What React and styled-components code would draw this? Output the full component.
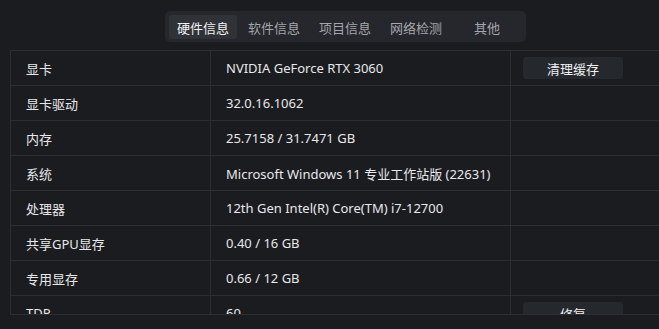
import React, { useState } from "react";
import styled, { createGlobalStyle } from "styled-components";

const GlobalStyle = createGlobalStyle`
  html, body {
    margin: 0;
    padding: 0;
    background: #1b1c20;
    overflow: hidden;
  }
  body {
    font-family: "Noto Sans", "Noto Sans CJK SC", sans-serif;
    font-size: 13px;
    color: #e8e8ea;
  }
`;

const tabs = ["硬件信息", "软件信息", "项目信息", "网络检测", "其他"];

const rows = [
  { label: "显卡", value: "NVIDIA GeForce RTX 3060", action: "清理缓存" },
  { label: "显卡驱动", value: "32.0.16.1062" },
  { label: "内存", value: "25.7158 / 31.7471 GB" },
  { label: "系统", value: "Microsoft Windows 11 专业工作站版 (22631)" },
  { label: "处理器", value: "12th Gen Intel(R) Core(TM) i7-12700" },
  { label: "共享GPU显存", value: "0.40 / 16 GB" },
  { label: "专用显存", value: "0.66 / 12 GB" },
  { label: "TDP", value: "60", action: "修复" },
];

const App = () => {
  const [active, setActive] = useState(0);
  return (
    <Page>
      <GlobalStyle />
      <TabRow>
        <TabBar>
          {tabs.map((t, i) => (
            <Tab key={t} $active={i === active} onClick={() => setActive(i)}>
              {t}
            </Tab>
          ))}
        </TabBar>
      </TabRow>

      {/* 表格区域，超出部分被裁掉 */}
      <TableBox>
        {rows.map((r) => (
          <Row key={r.label}>
            <Cell>{r.label}</Cell>
            <Cell>{r.value}</Cell>
            <Cell $last>{r.action && <ActionButton>{r.action}</ActionButton>}</Cell>
          </Row>
        ))}
      </TableBox>
    </Page>
  );
};

export default App;

const Page = styled.div`
  width: 691px;
  box-sizing: border-box;
  padding: 11px 10px 0;
  display: flex;
  flex-direction: column;
  gap: 8px;
`;

const TabRow = styled.div`
  display: flex;
  justify-content: center;
`;

const TabBar = styled.div`
  display: flex;
  gap: 3px;
  padding: 4px 5px 3px 4px;
  height: 24px;
  background: #25272c;
  border-radius: 5px;
`;

const Tab = styled.div`
  width: 68px;
  height: 24px;
  display: flex;
  align-items: center;
  justify-content: center;
  border-radius: 3px;
  font-size: 13px;
  cursor: pointer;
  color: ${(p) => (p.$active ? "#f2f2f4" : "#a3a6ab")};
  background: ${(p) => (p.$active ? "#2f3237" : "transparent")};
`;

const TableBox = styled.div`
  height: 265px;
  box-sizing: border-box;
  border: 1px solid #2c2e33;
  border-right: none;
  overflow: hidden;
`;

const Row = styled.div`
  display: grid;
  grid-template-columns: 200px 300px 1fr;
  height: 35px;
  box-sizing: border-box;
  border-bottom: 1px solid #2c2e33;
`;

const Cell = styled.div`
  display: flex;
  align-items: center;
  padding: 0 ${(p) => (p.$last ? "12px" : "15px")};
  box-sizing: border-box;
  border-right: ${(p) => (p.$last ? "none" : "1px solid #2c2e33")};
  color: #e8e8ea;
  white-space: nowrap;
`;

const ActionButton = styled.button`
  width: 100px;
  height: 22px;
  border: none;
  border-radius: 3px;
  background: #25282d;
  color: #f0f0f2;
  font-family: inherit;
  font-size: 13px;
  padding: 0;
  cursor: pointer;
`;
